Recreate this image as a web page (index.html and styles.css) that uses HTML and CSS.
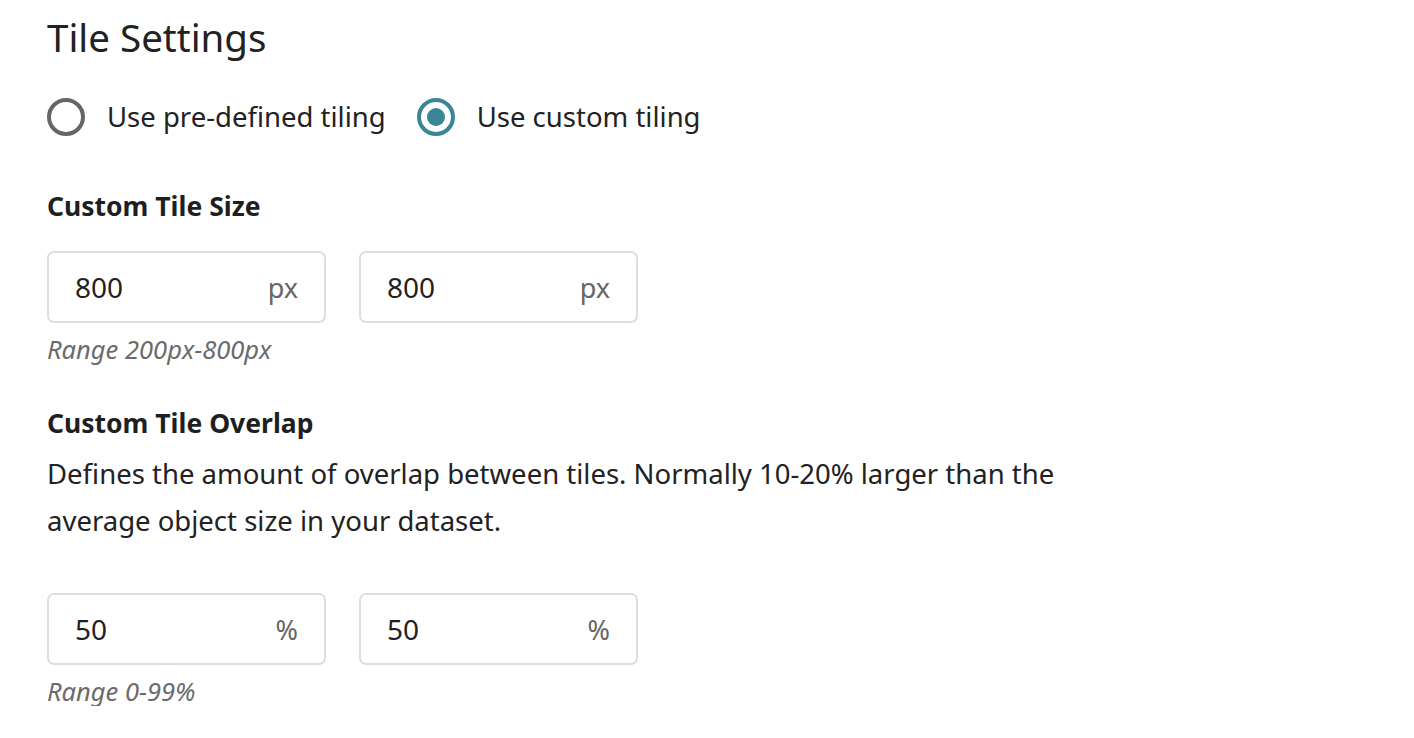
FILE: index.html
```html
<!DOCTYPE html>
<html lang="en">
<head>
<meta charset="utf-8">
<title>Tile Settings</title>
<link rel="stylesheet" href="styles.css">
</head>
<body>
<main class="page">
  <h1 class="title">Tile Settings</h1>

  <div class="radio-group" role="radiogroup">
    <label class="radio">
      <span class="radio-circle"></span>
      <span class="radio-text">Use pre-defined tiling</span>
    </label>
    <label class="radio radio-checked">
      <span class="radio-circle"><span class="radio-dot"></span></span>
      <span class="radio-text">Use custom tiling</span>
    </label>
  </div>

  <h2 class="section-label label-size">Custom Tile Size</h2>
  <div class="input-row">
    <div class="field"><span class="field-value">800</span><span class="field-unit">px</span></div>
    <div class="field"><span class="field-value">800</span><span class="field-unit">px</span></div>
  </div>
  <p class="helper">Range 200px-800px</p>

  <h2 class="section-label label-overlap">Custom Tile Overlap</h2>
  <p class="description">Defines the amount of overlap between tiles. Normally 10-20% larger than the average object size in your dataset.</p>
  <div class="input-row input-row-overlap">
    <div class="field"><span class="field-value">50</span><span class="field-unit">%</span></div>
    <div class="field"><span class="field-value">50</span><span class="field-unit">%</span></div>
  </div>
  <p class="helper">Range 0-99%</p>
</main>
</body>
</html>
```

FILE: styles.css
```css
* { box-sizing: border-box; }

body {
  margin: 0;
  background: #ffffff;
  color: #1f1f1f;
  font-family: "Noto Sans", "Roboto", "Liberation Sans", sans-serif;
}

.page {
  padding: 0 47px;
  max-width: 1114px;
}

.title {
  margin: 13px 0 0;
  font-size: 38.5px;
  line-height: 48px;
  font-weight: 400;
  color: #222;
}

.radio-group {
  display: flex;
  align-items: center;
  gap: 31px;
  margin-top: 37px;
}

.radio {
  display: flex;
  align-items: center;
  gap: 22px;
}

.radio-circle {
  width: 38px;
  height: 38px;
  border-radius: 50%;
  border: 4px solid #666;
  display: flex;
  align-items: center;
  justify-content: center;
}

.radio-checked .radio-circle { border-color: #3b8599; }

.radio-dot {
  width: 18px;
  height: 18px;
  border-radius: 50%;
  background: #3b8599;
}

.radio-text {
  font-size: 27.5px;
  line-height: 38px;
  color: #222;
}

.section-label {
  margin: 0;
  font-size: 26.5px;
  line-height: 32px;
  font-weight: 700;
  color: #1f1f1f;
}

.label-size { margin-top: 54px; }
.label-overlap { margin-top: 43px; }

.input-row {
  display: flex;
  gap: 33px;
  margin-top: 29px;
}

.input-row-overlap { margin-top: 49px; }

.field {
  width: 279px;
  height: 72px;
  border: 2px solid #dedede;
  border-radius: 7px;
  display: flex;
  align-items: center;
  justify-content: space-between;
  padding: 0 26px 0 26px;
}

.field-value {
  font-size: 28px;
  color: #1f1f1f;
}

.field-unit {
  font-size: 27px;
  color: #666;
}

.helper {
  margin: 11px 0 0;
  font-size: 25.5px;
  line-height: 30px;
  font-style: italic;
  color: #6b6b6b;
}

.description {
  margin: 11px 0 0;
  font-size: 27.5px;
  line-height: 47px;
  color: #222;
}
```
